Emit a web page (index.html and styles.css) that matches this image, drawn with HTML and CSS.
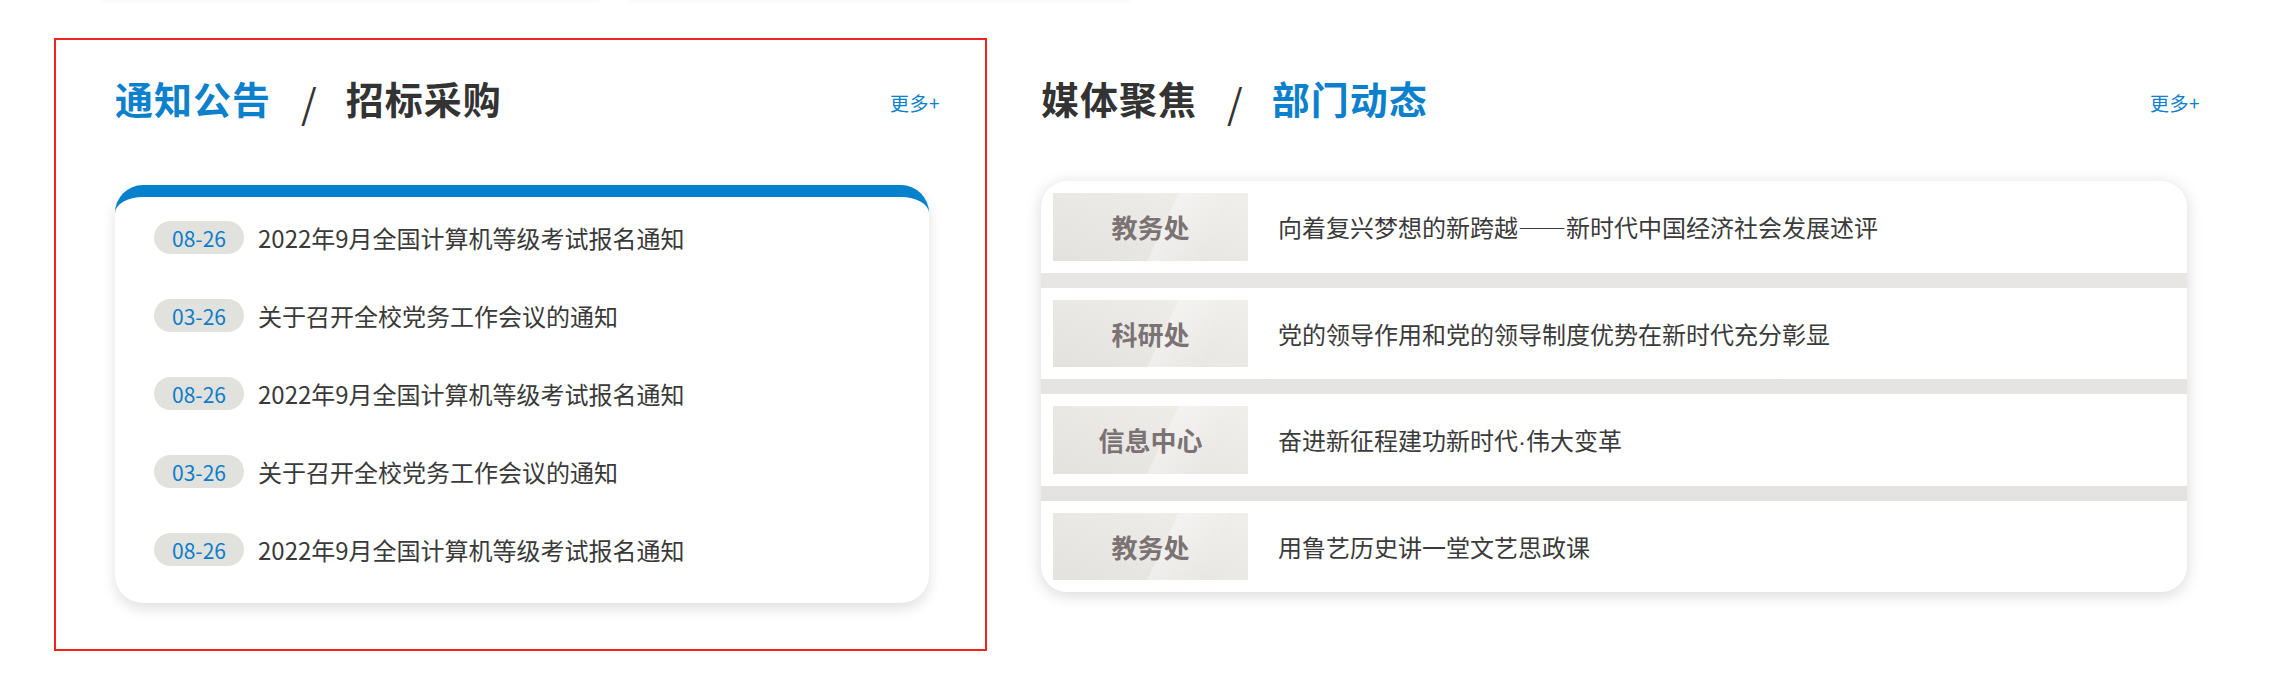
FILE: index.html
```html
<!DOCTYPE html>
<html lang="zh-CN">
<head>
    <meta charset="UTF-8">
    <meta name="viewport" content="width=device-width, initial-scale=1.0">
    <title>通知公告 / 媒体聚焦</title>
    <link rel="stylesheet" href="styles.css">
</head>
<body>
    <div class="prev-row">
        <div class="prev-card prev-a"></div>
        <div class="prev-card prev-b"></div>
    </div>

    <div class="main">
        <div class="section notice">
            <div class="sec-head">
                <h2 class="sec-title">
                    <span class="on">通知公告</span><span class="slash">/</span><span>招标采购</span>
                </h2>
                <a href="javascript:void(0);" class="more">更多+</a>
            </div>
            <ul class="notice-list">
                <li><span class="date">08-26</span><a href="javascript:void(0);">2022年9月全国计算机等级考试报名通知</a></li>
                <li><span class="date">03-26</span><a href="javascript:void(0);">关于召开全校党务工作会议的通知</a></li>
                <li><span class="date">08-26</span><a href="javascript:void(0);">2022年9月全国计算机等级考试报名通知</a></li>
                <li><span class="date">03-26</span><a href="javascript:void(0);">关于召开全校党务工作会议的通知</a></li>
                <li><span class="date">08-26</span><a href="javascript:void(0);">2022年9月全国计算机等级考试报名通知</a></li>
            </ul>
        </div>

        <div class="section media">
            <div class="sec-head">
                <h2 class="sec-title">
                    <span>媒体聚焦</span><span class="slash">/</span><span class="on">部门动态</span>
                </h2>
                <a href="javascript:void(0);" class="more">更多+</a>
            </div>
            <ul class="media-list">
                <li><span class="dept">教务处</span><a href="javascript:void(0);">向着复兴梦想的新跨越——新时代中国经济社会发展述评</a></li>
                <li><span class="dept">科研处</span><a href="javascript:void(0);">党的领导作用和党的领导制度优势在新时代充分彰显</a></li>
                <li><span class="dept">信息中心</span><a href="javascript:void(0);">奋进新征程建功新时代<span class="dot">·</span>伟大变革</a></li>
                <li><span class="dept">教务处</span><a href="javascript:void(0);">用鲁艺历史讲一堂文艺思政课</a></li>
            </ul>
        </div>
    </div>
</body>
</html>
```

FILE: styles.css
```css
* {
    box-sizing: border-box;
}
body {
    margin: 0;
    background: #fff;
    font-family: "Noto Sans CJK SC", "Noto Sans", sans-serif;
    color: #333;
}
a {
    text-decoration: none;
    color: inherit;
}
ul {
    list-style: none;
    margin: 0;
    padding: 0;
}
.prev-row {
    display: flex;
    gap: 28px;
    padding-left: 102px;
    height: 0;
}
.prev-card {
    height: 20px;
    margin-top: -20px;
    background: #fff;
    box-shadow: 0 1px 5px rgba(0, 0, 0, 0.045);
}
.prev-a {
    width: 498px;
}
.prev-b {
    width: 502px;
}
.main {
    display: flex;
    align-items: flex-start;
    padding: 38px 0 0 54px;
}
.section {
    flex: none;
}
.notice {
    width: 933px;
    height: 613px;
    border: 2px solid #f2231b;
    padding: 38px 56px 0 59px;
}
.media {
    width: 1146px;
    margin-left: 54px;
    padding-top: 40px;
}
.sec-head {
    display: flex;
    align-items: center;
    justify-content: space-between;
    height: 40px;
}
.notice .sec-head {
    margin-right: -11px;
    margin-bottom: 67px;
}
.media .sec-head {
    margin-right: -13px;
    margin-bottom: 63px;
}
.sec-title {
    margin: 0;
    display: flex;
    align-items: center;
    font-size: 38px;
    line-height: 40px;
    font-weight: 700;
    letter-spacing: 1px;
    color: #333;
}
.sec-title .on {
    color: #0b80cc;
}
.sec-title .slash {
    font-weight: 400;
    font-size: 40px;
    margin: 8px 28px 0 30px;
    color: #333;
}
.more {
    font-size: 19px;
    letter-spacing: 0.5px;
    color: #0b80cc;
    margin-top: 8px;
}
.notice-list {
    width: 814px;
    height: 418px;
    border-top: 12px solid #0580cc;
    border-radius: 28px;
    background: #fff;
    box-shadow: 0 6px 14px rgba(0, 0, 0, 0.12);
    padding: 24px 0 0 39px;
}
.notice-list li {
    display: flex;
    align-items: center;
    height: 33px;
    margin-bottom: 45px;
}
.date {
    display: inline-flex;
    align-items: center;
    justify-content: center;
    width: 90px;
    height: 33px;
    border-radius: 17px;
    background: #e1e1dd;
    color: #0b7dcb;
    font-size: 21px;
}
.notice-list a {
    margin-left: 14px;
    font-size: 24px;
    color: #3a3a3a;
}
.media-list {
    display: flex;
    flex-direction: column;
    gap: 15px;
    border-radius: 26px;
    overflow: hidden;
    background: linear-gradient(#e9e8e6, #e2e1df);
    box-shadow: 0 3px 16px rgba(0, 0, 0, 0.16);
}
.media-list li {
    display: flex;
    align-items: center;
    height: 91.5px;
    padding: 0 12px;
    background: #fff;
}
.dept {
    display: flex;
    align-items: center;
    justify-content: center;
    width: 195px;
    height: 67.5px;
    flex: none;
    background:
        linear-gradient(115deg, transparent 55%, rgba(255, 255, 255, 0.35) 56%, transparent 80%),
        linear-gradient(200deg, #f0efec 0%, #e9e7e4 60%, #e4e2df 100%);
    font-size: 26px;
    font-weight: 700;
    color: #7b7373;
}
.media-list a {
    margin-left: 30px;
    font-size: 24px;
    color: #3b3b3b;
}
.dot {
    font-family: "Liberation Sans", sans-serif;
}
```
